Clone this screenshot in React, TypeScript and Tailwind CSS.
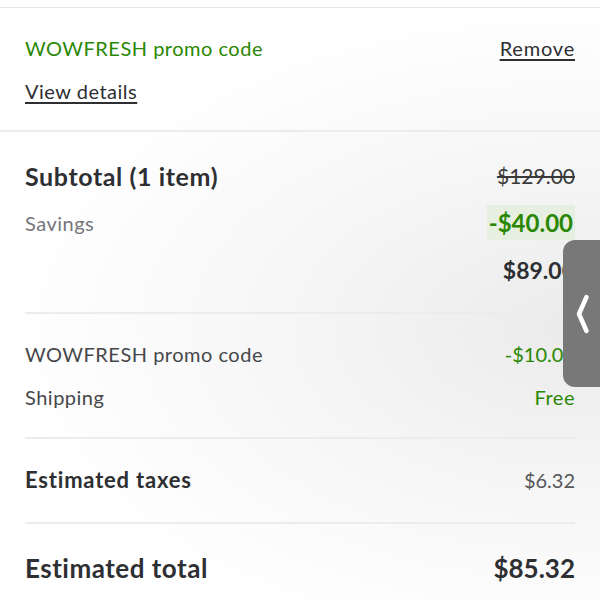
export default function App() {
  return (
    <div
      className="relative h-[600px] w-[600px] overflow-hidden bg-[radial-gradient(ellipse_at_95%_55%,#ebebeb_0%,#f6f6f6_35%,#ffffff_70%)] text-[#2e2f32]"
      style={{ fontFamily: "Lato, 'Open Sans', sans-serif" }}
    >
      <div className="h-[7px] bg-white" />
      <div className="border-t border-[#e6e6e6] px-[25px] pb-[27px] pt-[28px]">
        <div className="flex items-center justify-between leading-[24px]">
          <span className="text-[20px] tracking-[0.5px] text-[#2a8703]">WOWFRESH promo code</span>
          <span className="text-[20px] tracking-[0.8px] underline underline-offset-[3px]">Remove</span>
        </div>
        <div className="mt-[19px] text-[20px] leading-[24px] tracking-[0.5px] underline underline-offset-[3px]">
          View details
        </div>
      </div>
      <div className="border-t-2 border-[#ececec] px-[25px]">
        <div className="flex items-center justify-between pt-[29px] leading-[30px]">
          <span className="text-[25px] font-bold tracking-[0.6px]">Subtotal (1 item)</span>
          <span className="text-[21px] text-[#3a3a3a] line-through">$129.00</span>
        </div>
        <div className="mt-[14px] flex h-[35px] items-center justify-between">
          <span className="text-[20px] tracking-[0.5px] text-[#74767c]">Savings</span>
          <span className="bg-[#e6efe0] px-[2px] text-[24px] font-bold leading-[35px] text-[#2a8703]">
            -$40.00
          </span>
        </div>
        <div className="mt-[16px] flex justify-end leading-[28px]">
          <span className="text-[23px] font-bold">$89.00</span>
        </div>
        <div className="mt-[28px] border-t-2 border-[#ececec] pt-[28px]">
          <div className="flex items-center justify-between leading-[24px]">
            <span className="text-[20px] tracking-[0.5px] text-[#46474a]">WOWFRESH promo code</span>
            <span className="text-[20px] text-[#2a8703]">-$10.00</span>
          </div>
          <div className="mt-[19px] flex items-center justify-between leading-[24px]">
            <span className="text-[20px] tracking-[0.5px] text-[#46474a]">Shipping</span>
            <span className="text-[20px] tracking-[0.5px] text-[#2a8703]">Free</span>
          </div>
        </div>
        <div className="mt-[28px] flex items-center justify-between border-t-2 border-[#ececec] pb-[28px] pt-[27px] leading-[28px]">
          <span className="text-[22px] font-bold tracking-[0.8px]">Estimated taxes</span>
          <span className="text-[20px] text-[#555659]">$6.32</span>
        </div>
        <div className="flex items-center justify-between border-t-2 border-[#ececec] pt-[28px] leading-[32px]">
          <span className="text-[26px] font-bold tracking-[0.5px]">Estimated total</span>
          <span className="text-[26px] font-bold">$85.32</span>
        </div>
      </div>

      <div className="absolute left-[563px] top-[240px] flex h-[147px] w-[40px] items-center justify-center rounded-l-[12px] bg-[#787878]">
        <svg width="14" height="40" viewBox="0 0 14 40" fill="none">
          <path d="M10.5 3 L3 20 L10.5 37" stroke="white" strokeWidth="4.5" strokeLinecap="round" strokeLinejoin="round" />
        </svg>
      </div>
    </div>
  );
}
